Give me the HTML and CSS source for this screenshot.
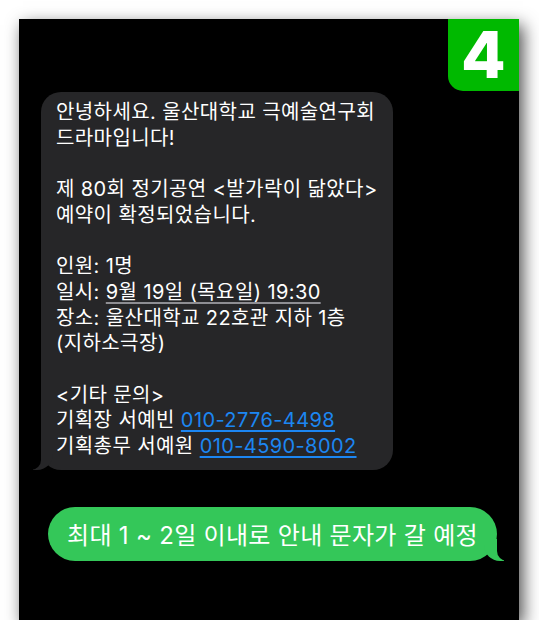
FILE: index.html
```html
<!DOCTYPE html>
<html lang="ko">
<head>
<meta charset="utf-8">
<link rel="stylesheet" href="styles.css">
</head>
<body>
<div class="panel">
  <div class="badge">4</div>
  <div class="thread">
    <div class="bubble received">
      안녕하세요. 울산대학교 극예술연구회<br>
      드라마입니다!<br>
      <br>
      제 80회 정기공연 &lt;발가락이 닮았다&gt;<br>
      예약이 확정되었습니다.<br>
      <br>
      인원: 1명<br>
      일시: <span class="detect">9월 19일 (목요일) 19:30</span><br>
      장소: 울산대학교 22호관 지하 1층<br>
      (지하소극장)<br>
      <br>
      &lt;기타 문의&gt;<br>
      기획장 서예빈 <a class="link" href="#">010-2776-4498</a><br>
      기획총무 서예원 <a class="link" href="#">010-4590-8002</a>
    </div>
    <div class="bubble sent">최대 1 ~ 2일 이내로 안내 문자가 갈 예정</div>
  </div>
</div>
</body>
</html>
```
FILE: styles.css
```css
html, body {
  margin: 0;
  padding: 0;
  background: #ffffff;
}
body {
  padding: 19px 0 0 19px;
  font-family: Inter, "Noto Sans CJK KR", sans-serif;
}
.panel {
  position: relative;
  width: 500px;
  height: 601px;
  background: #000;
  box-shadow: 4px 6px 16px rgba(0, 0, 0, 0.7);
}
.badge {
  position: absolute;
  top: 0;
  right: 0;
  width: 71px;
  height: 72px;
  background: #00b900;
  border-bottom-left-radius: 15px;
  color: #fff;
  font-family: Inter, "Liberation Sans", sans-serif;
  font-weight: 800;
  font-size: 65px;
  line-height: 72px;
  text-align: center;
}
.thread {
  display: flex;
  flex-direction: column;
  padding-top: 73px;
}
.bubble {
  position: relative;
  color: #fff;
}
.received {
  margin-left: 22px;
  width: 352px;
  box-sizing: border-box;
  padding: 8px 8px 10px 15px;
  background: #262628;
  border-radius: 20px;
  font-size: 20px;
  line-height: 25.7px;
  letter-spacing: 0.4px;
  white-space: nowrap;
}
.received::before {
  content: "";
  position: absolute;
  bottom: 0;
  left: -8px;
  width: 20px;
  height: 22px;
  background: #262628;
  border-bottom-right-radius: 16px;
}
.received::after {
  content: "";
  position: absolute;
  bottom: 0;
  left: -10px;
  width: 10px;
  height: 22px;
  background: #000;
  border-bottom-right-radius: 10px;
}
.detect {
  text-decoration: underline;
  text-decoration-color: #8e8e93;
  text-underline-offset: 3px;
}
.link {
  color: #1c86f2;
  text-decoration: underline;
  text-underline-offset: 3px;
}
.sent {
  align-self: flex-end;
  margin-top: 37px;
  margin-right: 22px;
  height: 54px;
  width: 449px;
  box-sizing: border-box;
  background: #34c759;
  border-radius: 27px;
  display: flex;
  align-items: center;
  justify-content: center;
  font-size: 24px;
  letter-spacing: 0.3px;
  white-space: nowrap;
}
.sent::before {
  content: "";
  position: absolute;
  bottom: 0;
  right: -7px;
  width: 20px;
  height: 22px;
  background: #34c759;
  border-bottom-left-radius: 16px;
}
.sent::after {
  content: "";
  position: absolute;
  bottom: 0;
  right: -10px;
  width: 10px;
  height: 22px;
  background: #000;
  border-bottom-left-radius: 10px;
}
```
